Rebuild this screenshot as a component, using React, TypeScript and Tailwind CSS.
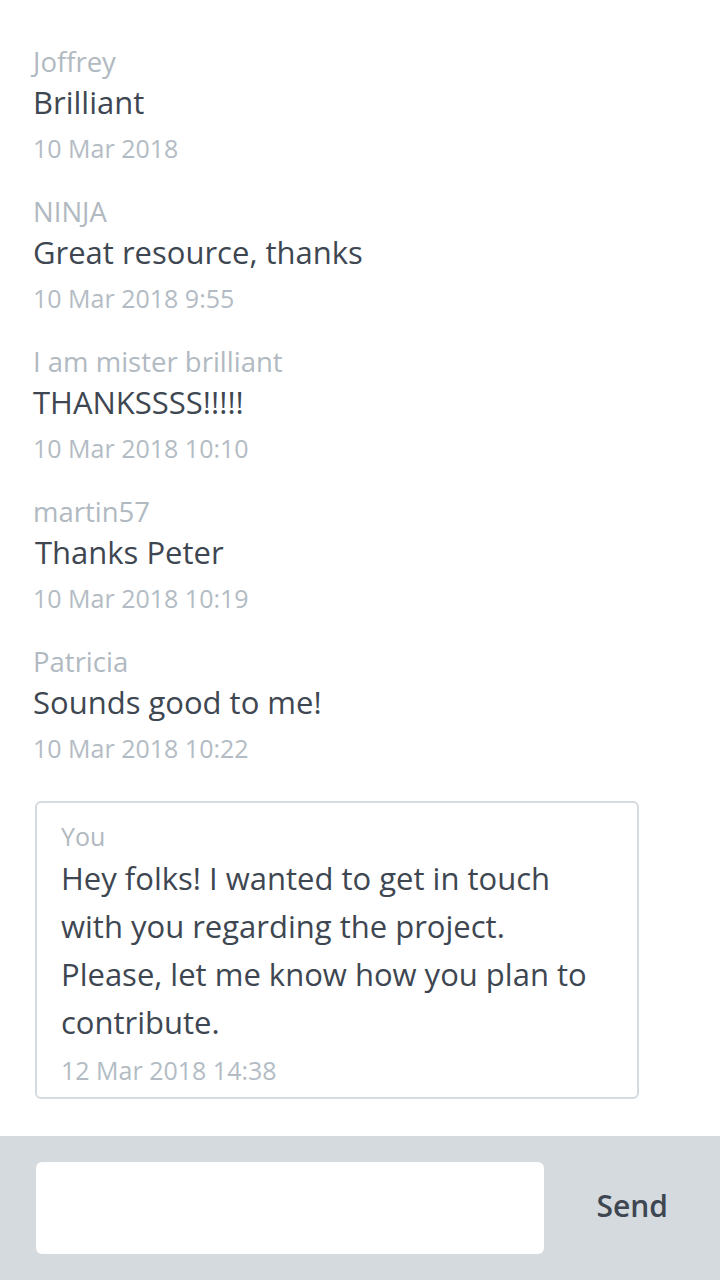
const messages = [
  { author: 'Joffrey', text: 'Brilliant', date: '10 Mar 2018' },
  { author: 'NINJA', text: 'Great resource, thanks', date: '10 Mar 2018 9:55' },
  { author: 'I am mister brilliant', text: 'THANKSSSS!!!!!', date: '10 Mar 2018 10:10' },
  { author: 'martin57', text: 'Thanks Peter', date: '10 Mar 2018 10:19', indent: true },
  { author: 'Patricia', text: 'Sounds good to me!', date: '10 Mar 2018 10:22' },
]

export default function App() {
  return (
    <div
      className="flex min-h-screen flex-col bg-white"
      style={{ fontFamily: '"Open Sans", "Noto Sans", sans-serif' }}
    >
      <div className="flex-1 px-[33px] pt-[42px]">
        <div className="flex flex-col gap-6">
          {messages.map(m => (
            <div key={m.author}>
              <p className="text-[27.5px] leading-[40px] text-[#b1b9c1]">{m.author}</p>
              <p className={`text-[31px] leading-[40px] text-[#3e4751] ${m.indent ? 'pl-[2px]' : ''}`}>{m.text}</p>
              <p className="mt-1.5 text-[25px] leading-[40px] text-[#b3bcc4]">{m.date}</p>
            </div>
          ))}
        </div>

        {/* own message */}
        <div className="ml-[2px] mt-[33px] w-[604px] rounded-md border-2 border-[#d5dadf] px-6 pb-[7px] pt-[15px]">
          <p className="text-[25px] leading-[36px] text-[#b1b9c1]">You</p>
          <p className="text-[31px] leading-[48px] text-[#3e4751]">
            Hey folks! I wanted to get in touch
            <br />
            with you regarding the project.
            <br />
            Please, let me know how you plan to
            <br />
            contribute.
          </p>
          <p className="mt-1 text-[25px] leading-[40px] text-[#b3bcc4]">12 Mar 2018 14:38</p>
        </div>
      </div>

      <div className="mt-[37px] flex items-center bg-[#d5dadf] py-[26px] pl-9 pr-[52px]">
        <div className="h-[92px] w-[508px] rounded-md bg-white" />
        <span className="-mt-1.5 ml-auto text-[30px] font-semibold text-[#3e4751]">Send</span>
      </div>
    </div>
  )
}
